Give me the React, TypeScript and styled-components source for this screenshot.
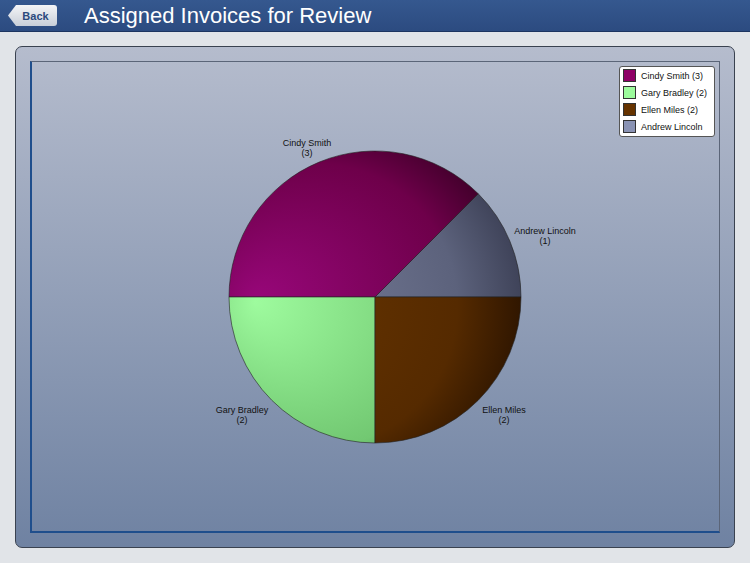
import React from "react";
import styled, { createGlobalStyle } from "styled-components";

const Global = createGlobalStyle`
  html, body { margin: 0; padding: 0; background: #e1e4e8; font-family: "Liberation Sans", Arial, sans-serif; }
`;
const Page = styled.div`width: 750px; height: 563px; display: flex; flex-direction: column; overflow: hidden;`;
const Header = styled.div`
  height: 31px; background: linear-gradient(#35588f, #2c4b80); display: flex; align-items: center;
  padding-left: 8px; gap: 27px; border-bottom: 1px solid #1d3560;
`;
const BackBtn = styled.div`
  position: relative; height: 21px; width: 49px; color: #2b4a7d; font-size: 11px; font-weight: bold;
  display: flex; align-items: center; justify-content: center; padding-left: 6px; box-sizing: border-box;
  background: linear-gradient(#f4f5f7, #c8ced8); border-radius: 3px;
  clip-path: polygon(8px 0, 100% 0, 100% 100%, 8px 100%, 0 50%);
`;
const Title = styled.h1`margin: 0; color: #fff; font-weight: normal; font-size: 22px;`;
const Body = styled.div`flex: 1; padding: 14px 15px 15px 15px; display: flex;`;
const Panel = styled.div`
  flex: 1; border: 1px solid #3a4250; border-radius: 7px; padding: 14px;
  background: linear-gradient(#b5bccd, #6f82a2); display: flex;
`;
const Plot = styled.div`
  flex: 1; position: relative; border-left: 2px solid #1f4e8c; border-bottom: 2px solid #1f4e8c;
  border-top: 1px solid #5b6578; border-right: 1px solid #5b6578;
`;
const Legend = styled.div`
  position: absolute; right: 4px; top: 4px; width: 96px; background: #fff; border: 1px solid #555;
  border-radius: 3px; padding: 1px 3px 2px; display: flex; flex-direction: column; gap: 2px; box-sizing: border-box;
`;
const LegendRow = styled.div`display: flex; align-items: center; gap: 5px; font-size: 9px; color: #111; height: 15px;`;
const Swatch = styled.span<{ $c: string }>`width: 13px; height: 13px; background: ${p => p.$c}; border: 1px solid #333; box-sizing: border-box;`;
const Label = styled.div<{ $x: number; $y: number }>`
  position: absolute; left: ${p => p.$x}px; top: ${p => p.$y}px; transform: translateX(-50%);
  font-size: 9px; color: #111; text-align: center; line-height: 10px; white-space: nowrap;
`;

const cx = 375 - 32, cy = 296 - 61, r = 146;
const pt = (deg: number) => [cx + r * Math.cos((deg * Math.PI) / 180), cy - r * Math.sin((deg * Math.PI) / 180)];
const slice = (a: number, b: number) => {
  const [x1, y1] = pt(a), [x2, y2] = pt(b);
  return `M${cx},${cy} L${x1},${y1} A${r},${r} 0 ${b - a > 180 ? 1 : 0} 0 ${x2},${y2} Z`;
};
const slices = [
  { id: "a", a: 0, b: 45, c1: "#7a809c", c2: "#5c627c", c3: "#3e4258" },
  { id: "c", a: 45, b: 180, c1: "#98077a", c2: "#6e004a", c3: "#3e0028" },
  { id: "g", a: 180, b: 270, c1: "#9efb9e", c2: "#72c872", c3: "#3f7a3f" },
  { id: "e", a: 270, b: 360, c1: "#6a3600", c2: "#552a00", c3: "#2e1500" },
];

export default function App() {
  return (
    <Page>
      <Global />
      <Header>
        <BackBtn>Back</BackBtn>
        <Title>Assigned Invoices for Review</Title>
      </Header>
      <Body>
        <Panel>
          <Plot>
            <svg width="688" height="470" style={{ position: "absolute", left: 0, top: 0 }}>
              <defs>
                {slices.map(s => (
                  <radialGradient key={s.id} id={s.id} cx={cx - 40} cy={cy + 10} r={r * 1.3} fx={cx - 120} fy={cy + 5} gradientUnits="userSpaceOnUse">
                    <stop offset="0" stopColor={s.c1} />
                    <stop offset="0.75" stopColor={s.c2} />
                    <stop offset="1" stopColor={s.c3} />
                  </radialGradient>
                ))}
              </defs>
              {slices.map(s => (
                <path key={s.id} d={slice(s.a, s.b)} fill={`url(#${s.id})`} stroke="#222" strokeWidth="0.6" />
              ))}
            </svg>
            <Label $x={275} $y={76}>Cindy Smith<br />(3)</Label>
            <Label $x={513} $y={164}>Andrew Lincoln<br />(1)</Label>
            <Label $x={210} $y={343}>Gary Bradley<br />(2)</Label>
            <Label $x={472} $y={343}>Ellen Miles<br />(2)</Label>
            <Legend>
              <LegendRow><Swatch $c="#8e0066" />Cindy Smith (3)</LegendRow>
              <LegendRow><Swatch $c="#9cfb9c" />Gary Bradley (2)</LegendRow>
              <LegendRow><Swatch $c="#663300" />Ellen Miles (2)</LegendRow>
              <LegendRow><Swatch $c="#8a93b4" />Andrew Lincoln</LegendRow>
            </Legend>
          </Plot>
        </Panel>
      </Body>
    </Page>
  );
}
